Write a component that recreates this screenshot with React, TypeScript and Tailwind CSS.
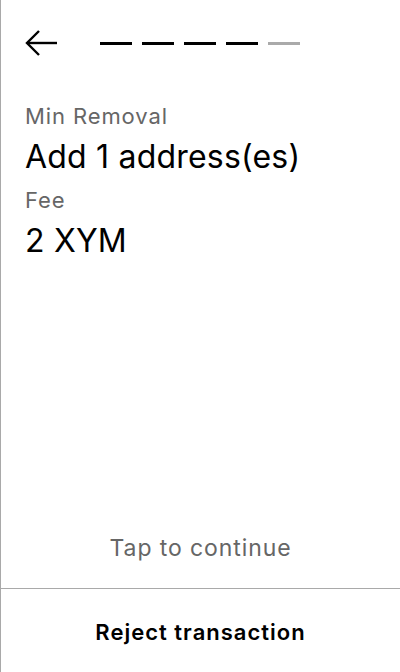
const Arrow = () => (
  <svg width="34" height="28" viewBox="0 0 34 28" fill="none" stroke="black" strokeWidth="2.4">
    <path d="M33 14H3" />
    <path d="M15 2L3 14l12 12" />
  </svg>
);

const steps = [true, true, true, true, false];

export default function App() {
  return (
    <div
      className="flex h-[672px] w-[400px] flex-col border-l border-[#a9a9a9] bg-white text-black"
      style={{ fontFamily: "Inter, 'Liberation Sans', sans-serif" }}
    >
      <div className="flex h-[86px] items-center pl-[23px]">
        <Arrow />
        <div className="ml-[42px] flex gap-[10px]">
          {steps.map((done, i) => (
            <div key={i} className={`h-[3px] w-[32px] ${done ? "bg-black" : "bg-[#aaaaaa]"}`} />
          ))}
        </div>
      </div>

      <div className="flex flex-col px-6 pt-[16px]">
        <div className="text-[22px] leading-[28px] tracking-[0.9px] text-[#666666]">Min Removal</div>
        <div className="mt-[7px] text-[32px] leading-[40px] tracking-[0.2px]">Add 1 address(es)</div>
        <div className="mt-[9px] text-[22px] leading-[28px] tracking-[0.9px] text-[#666666]">Fee</div>
        <div className="mt-[7px] text-[32px] leading-[40px] tracking-[0.2px]">2 XYM</div>
      </div>

      <div className="flex-1" />

      <div className="pb-[26px] text-center text-[23px] leading-[28px] tracking-[0.9px] text-[#666666]">
        Tap to continue
      </div>
      <div className="flex h-[84px] items-center justify-center border-t border-[#a9a9a9] pt-[3px]">
        <span className="text-[22px] font-semibold tracking-[1px]">Reject transaction</span>
      </div>
    </div>
  );
}
